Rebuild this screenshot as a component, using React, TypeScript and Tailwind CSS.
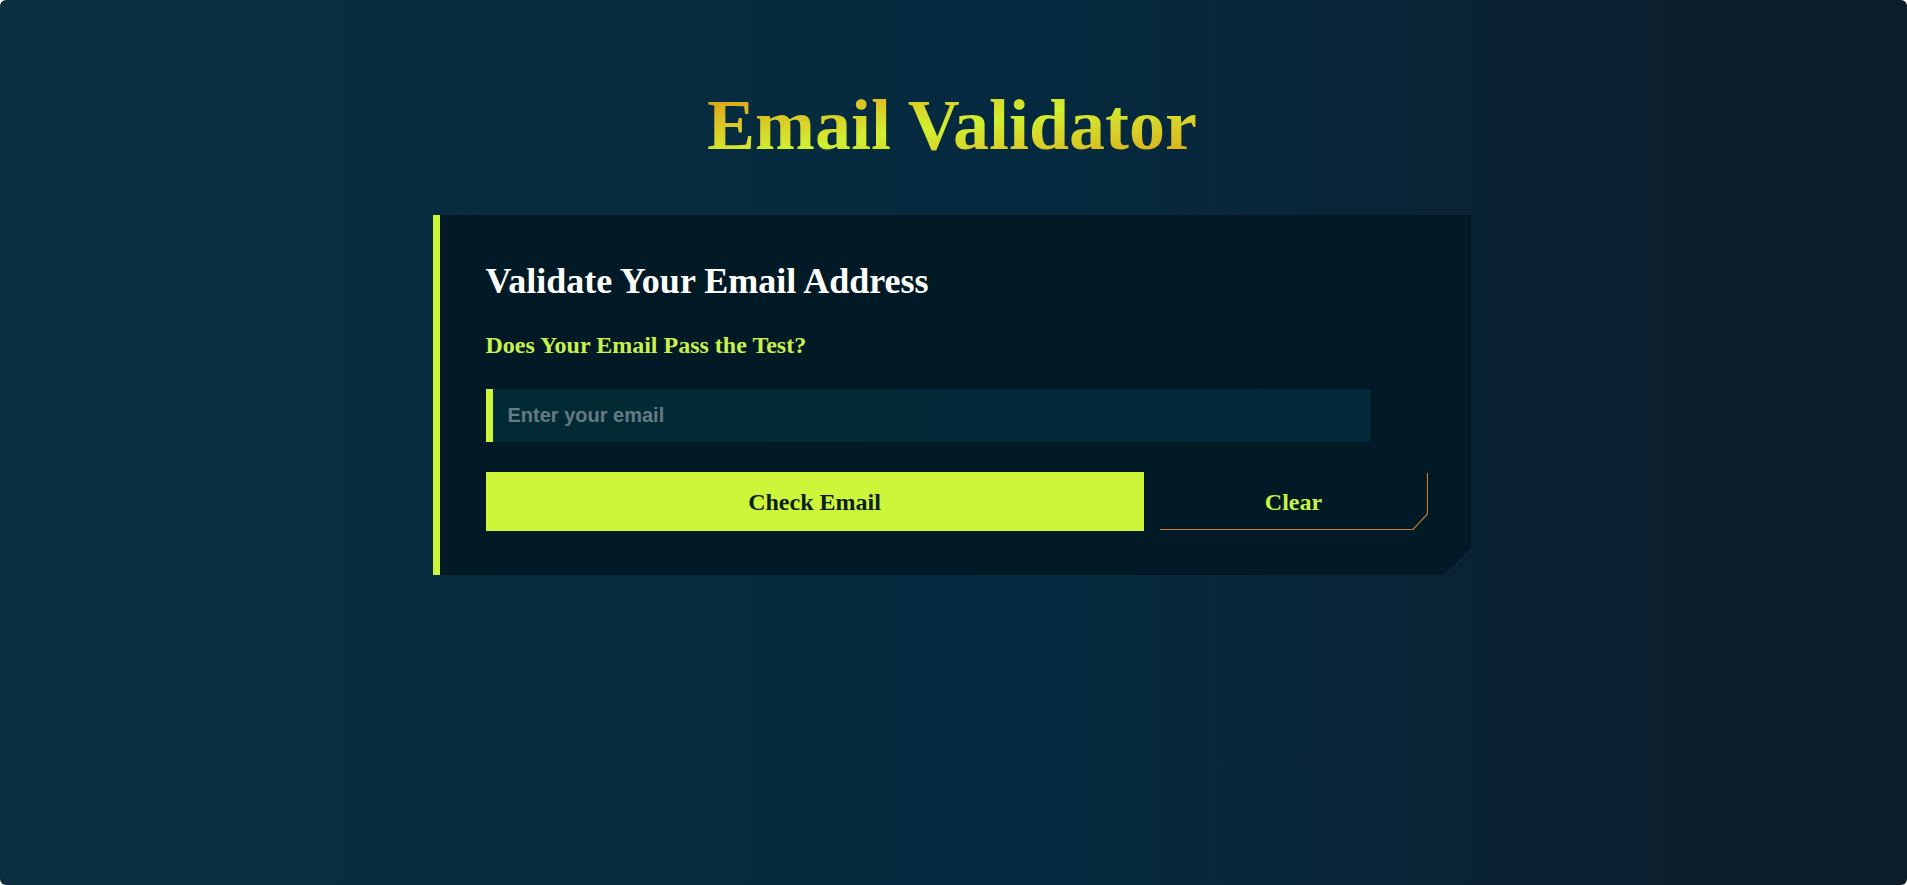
import React, { useState } from "react";

function ClearButton({ onClick }: { onClick: () => void }) {
  return (
    <button
      type="button"
      onClick={onClick}
      className="relative flex-1 h-[59px] bg-transparent text-[#c6f24a] text-[24px] font-bold leading-none cursor-pointer [font-family:'Liberation_Serif',serif]"
    >
      <svg
        className="absolute inset-0 w-full h-full pointer-events-none"
        viewBox="0 0 269 59"
        preserveAspectRatio="none"
        fill="none"
      >
        <path
          d="M268.5 1 V42 L254 57.5 H0"
          stroke="#c97d2c"
          strokeWidth="1.2"
        />
      </svg>
      <span className="relative">Clear</span>
    </button>
  );
}

export default function App() {
  const [email, setEmail] = useState("");
  return (
    <div className="h-screen w-full overflow-hidden rounded-md bg-linear-to-r from-[#0c2f3f] via-[#052a3f] via-55% to-[#0d1c2a] [font-family:'Liberation_Serif',serif]">
      <div className="flex flex-col items-center pt-[89px] pr-[3px]">
        <h1 className="text-[72px] leading-[72px] font-bold bg-linear-to-br from-[#db9514] via-[#d2f032] to-[#d9a418] bg-clip-text text-transparent [font-family:'Liberation_Serif',serif]">
          Email Validator
        </h1>
        <div className="mt-[54px] w-[1039px] bg-[#011a26] border-l-[7px] border-[#cdf53a] pl-[46px] pr-[44px] pt-[46px] pb-[44px] [clip-path:polygon(0_0,100%_0,100%_calc(100%_-_28px),calc(100%_-_28px)_100%,0_100%)]">
          <h2 className="text-[36px] leading-[40px] font-bold text-white">
            Validate Your Email Address
          </h2>
          <h3 className="mt-[30px] text-[24px] leading-[28px] font-bold text-[#c9f04e]">
            Does Your Email Pass the Test?
          </h3>
          <div className="mt-[30px] w-[884px] h-[53px] flex border-l-[7px] border-[#cdf53a] bg-linear-to-r from-[#022a34] to-[#03283a]">
            <input
              type="email"
              value={email}
              onChange={(e) => setEmail(e.target.value)}
              placeholder="Enter your email"
              className="flex-1 h-full bg-transparent pl-[15px] pr-3 text-[20px] font-bold text-white placeholder:text-[#647a84] outline-none [font-family:'Liberation_Sans',Arial,sans-serif]"
            />
          </div>
          <div className="mt-[30px] flex gap-[16px]">
            <button
              type="button"
              className="w-[658px] h-[59px] bg-[#cdf53a] text-[#0b1f1d] text-[24px] font-bold leading-none cursor-pointer [font-family:'Liberation_Serif',serif]"
            >
              Check Email
            </button>
            <ClearButton onClick={() => setEmail("")} />
          </div>
        </div>
      </div>
    </div>
  );
}
